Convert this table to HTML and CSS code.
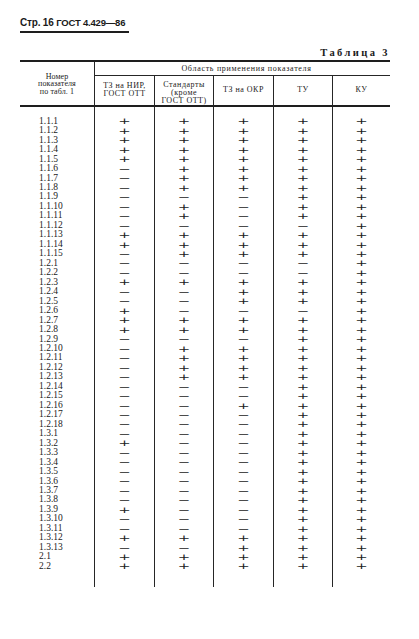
FILE: index.html
```html
<!DOCTYPE html>
<html lang="ru">
<head>
<meta charset="utf-8">
<title>ГОСТ 4.429—86, стр. 16</title>
<link rel="stylesheet" href="styles.css">
</head>
<body>
<div class="page">
  <div class="running-head"><span class="pg">Стр. 16</span> <b class="std-id">ГОСТ 4.429—86</b></div>
  <p class="caption">Таблица 3</p>
  <table class="spec">
    <colgroup>
      <col class="w-num"><col class="w-a"><col class="w-b"><col class="w-a"><col class="w-b"><col class="w-c">
    </colgroup>
    <thead>
      <tr class="h1">
        <th rowspan="2" class="num-h">Номер<br>показателя<br>по табл. 1</th>
        <th colspan="5" class="area c">Область применения показателя</th>
      </tr>
      <tr class="h2">
        <th class="c">ТЗ на НИР,<br>ГОСТ ОТТ</th>
        <th class="c stdc">Стандарты<br>(кроме<br>ГОСТ ОТТ)</th>
        <th class="c">ТЗ на ОКР</th>
        <th class="c">ТУ</th>
        <th class="c">КУ</th>
      </tr>
    </thead>
    <tbody>
      <tr class="gap-top"><td></td><td></td><td></td><td></td><td></td><td></td></tr>
      <tr><td class="n">1.1.1</td><td><span class="s">+</span></td><td><span class="s">+</span></td><td><span class="s">+</span></td><td><span class="s">+</span></td><td><span class="s">+</span></td></tr>
      <tr><td class="n">1.1.2</td><td><span class="s">+</span></td><td><span class="s">+</span></td><td><span class="s">+</span></td><td><span class="s">+</span></td><td><span class="s">+</span></td></tr>
      <tr><td class="n">1.1.3</td><td><span class="s">+</span></td><td><span class="s">+</span></td><td><span class="s">+</span></td><td><span class="s">+</span></td><td><span class="s">+</span></td></tr>
      <tr><td class="n">1.1.4</td><td><span class="s">+</span></td><td><span class="s">+</span></td><td><span class="s">+</span></td><td><span class="s">+</span></td><td><span class="s">+</span></td></tr>
      <tr><td class="n">1.1.5</td><td><span class="s">+</span></td><td><span class="s">+</span></td><td><span class="s">+</span></td><td><span class="s">+</span></td><td><span class="s">+</span></td></tr>
      <tr><td class="n">1.1.6</td><td><span class="s">−</span></td><td><span class="s">+</span></td><td><span class="s">+</span></td><td><span class="s">+</span></td><td><span class="s">+</span></td></tr>
      <tr><td class="n">1.1.7</td><td><span class="s">−</span></td><td><span class="s">+</span></td><td><span class="s">+</span></td><td><span class="s">+</span></td><td><span class="s">+</span></td></tr>
      <tr><td class="n">1.1.8</td><td><span class="s">−</span></td><td><span class="s">+</span></td><td><span class="s">+</span></td><td><span class="s">+</span></td><td><span class="s">+</span></td></tr>
      <tr><td class="n">1.1.9</td><td><span class="s">−</span></td><td><span class="s">−</span></td><td><span class="s">−</span></td><td><span class="s">+</span></td><td><span class="s">+</span></td></tr>
      <tr><td class="n">1.1.10</td><td><span class="s">−</span></td><td><span class="s">+</span></td><td><span class="s">−</span></td><td><span class="s">+</span></td><td><span class="s">+</span></td></tr>
      <tr><td class="n">1.1.11</td><td><span class="s">−</span></td><td><span class="s">+</span></td><td><span class="s">−</span></td><td><span class="s">+</span></td><td><span class="s">+</span></td></tr>
      <tr><td class="n">1.1.12</td><td><span class="s">−</span></td><td><span class="s">−</span></td><td><span class="s">−</span></td><td><span class="s">−</span></td><td><span class="s">+</span></td></tr>
      <tr><td class="n">1.1.13</td><td><span class="s">+</span></td><td><span class="s">+</span></td><td><span class="s">+</span></td><td><span class="s">+</span></td><td><span class="s">+</span></td></tr>
      <tr><td class="n">1.1.14</td><td><span class="s">+</span></td><td><span class="s">+</span></td><td><span class="s">+</span></td><td><span class="s">+</span></td><td><span class="s">+</span></td></tr>
      <tr><td class="n">1.1.15</td><td><span class="s">−</span></td><td><span class="s">+</span></td><td><span class="s">+</span></td><td><span class="s">+</span></td><td><span class="s">+</span></td></tr>
      <tr><td class="n">1.2.1</td><td><span class="s">−</span></td><td><span class="s">−</span></td><td><span class="s">−</span></td><td><span class="s">−</span></td><td><span class="s">+</span></td></tr>
      <tr><td class="n">1.2.2</td><td><span class="s">−</span></td><td><span class="s">−</span></td><td><span class="s">−</span></td><td><span class="s">−</span></td><td><span class="s">+</span></td></tr>
      <tr><td class="n">1.2.3</td><td><span class="s">+</span></td><td><span class="s">+</span></td><td><span class="s">+</span></td><td><span class="s">+</span></td><td><span class="s">+</span></td></tr>
      <tr><td class="n">1.2.4</td><td><span class="s">−</span></td><td><span class="s">−</span></td><td><span class="s">+</span></td><td><span class="s">+</span></td><td><span class="s">+</span></td></tr>
      <tr><td class="n">1.2.5</td><td><span class="s">−</span></td><td><span class="s">−</span></td><td><span class="s">+</span></td><td><span class="s">+</span></td><td><span class="s">+</span></td></tr>
      <tr><td class="n">1.2.6</td><td><span class="s">+</span></td><td><span class="s">−</span></td><td><span class="s">−</span></td><td><span class="s">−</span></td><td><span class="s">+</span></td></tr>
      <tr><td class="n">1.2.7</td><td><span class="s">+</span></td><td><span class="s">+</span></td><td><span class="s">+</span></td><td><span class="s">+</span></td><td><span class="s">+</span></td></tr>
      <tr><td class="n">1.2.8</td><td><span class="s">+</span></td><td><span class="s">+</span></td><td><span class="s">+</span></td><td><span class="s">+</span></td><td><span class="s">+</span></td></tr>
      <tr><td class="n">1.2.9</td><td><span class="s">−</span></td><td><span class="s">−</span></td><td><span class="s">−</span></td><td><span class="s">+</span></td><td><span class="s">+</span></td></tr>
      <tr><td class="n">1.2.10</td><td><span class="s">−</span></td><td><span class="s">+</span></td><td><span class="s">+</span></td><td><span class="s">+</span></td><td><span class="s">+</span></td></tr>
      <tr><td class="n">1.2.11</td><td><span class="s">−</span></td><td><span class="s">+</span></td><td><span class="s">+</span></td><td><span class="s">+</span></td><td><span class="s">+</span></td></tr>
      <tr><td class="n">1.2.12</td><td><span class="s">−</span></td><td><span class="s">+</span></td><td><span class="s">+</span></td><td><span class="s">+</span></td><td><span class="s">+</span></td></tr>
      <tr><td class="n">1.2.13</td><td><span class="s">−</span></td><td><span class="s">+</span></td><td><span class="s">+</span></td><td><span class="s">+</span></td><td><span class="s">+</span></td></tr>
      <tr><td class="n">1.2.14</td><td><span class="s">−</span></td><td><span class="s">−</span></td><td><span class="s">−</span></td><td><span class="s">+</span></td><td><span class="s">+</span></td></tr>
      <tr><td class="n">1.2.15</td><td><span class="s">−</span></td><td><span class="s">−</span></td><td><span class="s">−</span></td><td><span class="s">+</span></td><td><span class="s">+</span></td></tr>
      <tr><td class="n">1.2.16</td><td><span class="s">−</span></td><td><span class="s">−</span></td><td><span class="s">+</span></td><td><span class="s">+</span></td><td><span class="s">+</span></td></tr>
      <tr><td class="n">1.2.17</td><td><span class="s">−</span></td><td><span class="s">−</span></td><td><span class="s">−</span></td><td><span class="s">+</span></td><td><span class="s">+</span></td></tr>
      <tr><td class="n">1.2.18</td><td><span class="s">−</span></td><td><span class="s">−</span></td><td><span class="s">−</span></td><td><span class="s">+</span></td><td><span class="s">+</span></td></tr>
      <tr><td class="n">1.3.1</td><td><span class="s">−</span></td><td><span class="s">−</span></td><td><span class="s">−</span></td><td><span class="s">+</span></td><td><span class="s">+</span></td></tr>
      <tr><td class="n">1.3.2</td><td><span class="s">+</span></td><td><span class="s">−</span></td><td><span class="s">−</span></td><td><span class="s">+</span></td><td><span class="s">+</span></td></tr>
      <tr><td class="n">1.3.3</td><td><span class="s">−</span></td><td><span class="s">−</span></td><td><span class="s">−</span></td><td><span class="s">+</span></td><td><span class="s">+</span></td></tr>
      <tr><td class="n">1.3.4</td><td><span class="s">−</span></td><td><span class="s">−</span></td><td><span class="s">−</span></td><td><span class="s">+</span></td><td><span class="s">+</span></td></tr>
      <tr><td class="n">1.3.5</td><td><span class="s">−</span></td><td><span class="s">−</span></td><td><span class="s">−</span></td><td><span class="s">+</span></td><td><span class="s">+</span></td></tr>
      <tr><td class="n">1.3.6</td><td><span class="s">−</span></td><td><span class="s">−</span></td><td><span class="s">−</span></td><td><span class="s">+</span></td><td><span class="s">+</span></td></tr>
      <tr><td class="n">1.3.7</td><td><span class="s">−</span></td><td><span class="s">−</span></td><td><span class="s">−</span></td><td><span class="s">+</span></td><td><span class="s">+</span></td></tr>
      <tr><td class="n">1.3.8</td><td><span class="s">−</span></td><td><span class="s">−</span></td><td><span class="s">−</span></td><td><span class="s">+</span></td><td><span class="s">+</span></td></tr>
      <tr><td class="n">1.3.9</td><td><span class="s">+</span></td><td><span class="s">−</span></td><td><span class="s">−</span></td><td><span class="s">+</span></td><td><span class="s">+</span></td></tr>
      <tr><td class="n">1.3.10</td><td><span class="s">−</span></td><td><span class="s">−</span></td><td><span class="s">−</span></td><td><span class="s">+</span></td><td><span class="s">+</span></td></tr>
      <tr><td class="n">1.3.11</td><td><span class="s">−</span></td><td><span class="s">−</span></td><td><span class="s">−</span></td><td><span class="s">+</span></td><td><span class="s">+</span></td></tr>
      <tr><td class="n">1.3.12</td><td><span class="s">+</span></td><td><span class="s">+</span></td><td><span class="s">+</span></td><td><span class="s">+</span></td><td><span class="s">+</span></td></tr>
      <tr><td class="n">1.3.13</td><td><span class="s">−</span></td><td><span class="s">−</span></td><td><span class="s">+</span></td><td><span class="s">+</span></td><td><span class="s">+</span></td></tr>
      <tr><td class="n">2.1</td><td><span class="s">+</span></td><td><span class="s">+</span></td><td><span class="s">+</span></td><td><span class="s">+</span></td><td><span class="s">+</span></td></tr>
      <tr><td class="n">2.2</td><td><span class="s">+</span></td><td><span class="s">+</span></td><td><span class="s">+</span></td><td><span class="s">+</span></td><td><span class="s">+</span></td></tr>
      <tr class="gap-bottom"><td></td><td></td><td></td><td></td><td></td><td></td></tr>
    </tbody>
  </table>
</div>
</body>
</html>
```
FILE: styles.css
```css
html, body {
  margin: 0;
  padding: 0;
  background: #ffffff;
}

body {
  color: #1a1a1a;
  font-family: "Liberation Serif", "DejaVu Serif", serif;
}

.page {
  width: 370px;
  padding: 17px 29px 0 20px;
}

.running-head {
  display: block;
  width: max-content;
  font-family: "Liberation Sans", Arial, sans-serif;
  font-size: 10px;
  line-height: 12px;
  padding: 0 4px 2px 0;
  border-bottom: 2px solid #1e1e1e;
  white-space: nowrap;
}

.running-head .pg {
  font-weight: 700;
  letter-spacing: -0.2px;
}

.running-head .std-id {
  font-size: 9.5px;
  letter-spacing: -0.2px;
}

.caption {
  margin: 14px 0 1px;
  text-align: right;
  font-size: 10.5px;
  line-height: 12px;
  font-weight: 700;
  letter-spacing: 2.4px;
}

.spec {
  width: 370px;
  table-layout: fixed;
  border-collapse: separate;
  border-spacing: 0;
  border-top: 2px solid #1e1e1e;
}

.w-num { width: 74px; }
.w-a { width: 60px; }
.w-b { width: 59px; }
.w-c { width: 58px; }

.spec th {
  padding: 0;
  font-weight: 400;
  font-size: 8px;
  line-height: 7.9px;
  letter-spacing: 0.5px;
  text-align: center;
  vertical-align: middle;
  white-space: nowrap;
}

.spec .c {
  border-left: 1px solid #262626;
}

.spec .num-h {
  letter-spacing: 0.1px;
  padding-top: 2px;
  border-bottom: 2px solid #1e1e1e;
}

.spec .area {
  line-height: 13px;
  letter-spacing: 0.7px;
  padding-left: 8px;
  border-bottom: 1px solid #262626;
}

.spec .h2 th {
  border-bottom: 2px solid #1e1e1e;
}

.spec .h2 .stdc {
  padding-top: 5px;
}

.spec tbody td {
  padding: 0;
  font-size: 9px;
  line-height: 9.47px;
  text-align: center;
  vertical-align: middle;
  color: #222;
}

.spec tbody td + td {
  border-left: 1px solid #262626;
}

.spec .s {
  display: block;
  font-family: "DejaVu Sans", sans-serif;
  font-size: 9px;
  line-height: 8px;
  transform: scaleX(1.65);
}

.spec tbody td.n {
  text-align: left;
  padding-left: 19px;
  font-family: "Liberation Serif", serif;
  font-size: 9.5px;
  color: #1a1a1a;
}

.spec .gap-top td {
  height: 10px;
  line-height: 0;
}

.spec .gap-bottom td {
  height: 16px;
  line-height: 0;
}
```
